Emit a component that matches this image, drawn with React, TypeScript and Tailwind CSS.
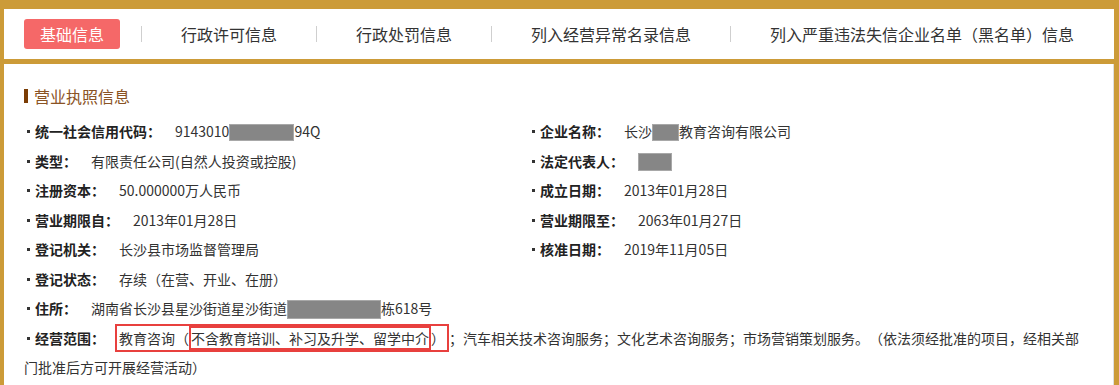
import React from "react";

const tabs = ["行政许可信息", "行政处罚信息", "列入经营异常名录信息", "列入严重违法失信企业名单（黑名单）信息"];

const Mask = ({ w, h = 17 }: { w: number; h?: number }) => (
    <span
        className="inline-block align-middle bg-[#868686] border border-[#a8a8a8] -mt-[2px]"
        style={{ width: w, height: h }}
    />
);

const Bullet = () => (
    <span className="inline-block align-middle w-[3px] h-[3px] bg-[#333] ml-[3px] mr-[5px] -mt-[3px]" />
);

const Row = ({ label, children }: { label: string; children: React.ReactNode }) => (
    <div className="leading-[29.5px] whitespace-nowrap">
        <Bullet />
        <span className="font-bold text-[#222]">{label}：</span>
        <span className="ml-[14px] text-[#333]">{children}</span>
    </div>
);

export default function App() {
    return (
        <div className="w-[1119px] h-[385px] overflow-hidden bg-[#cc9b38] pt-[9px] pl-[4px] pr-[5px] font-['Noto_Sans_CJK_SC','Noto_Sans',sans-serif] [text-spacing-trim:space-all]">
            <div className="h-[50px] bg-white flex items-center text-[16px] text-[#333] whitespace-nowrap">
                <div className="shrink-0 ml-[20px] mr-[21px] h-[30px] px-4 rounded-[3px] bg-[#f56868] text-white flex items-center">
                    基础信息
                </div>
                {tabs.map((t) => (
                    <React.Fragment key={t}>
                        <div className="shrink-0 w-px h-[16px] bg-[#cfcfcf]" />
                        <div className="shrink-0 px-[39px]">{t}</div>
                    </React.Fragment>
                ))}
            </div>

            <div className="mt-[5px] h-[330px] bg-white border-r border-[#dedede] pl-[20px] pr-[27px] pt-[19px] text-[14px]">
                <div className="h-[26px] flex items-center gap-[6px]">
                    <span className="w-[4px] h-[14px] bg-[#7b3d05]" />
                    <span className="text-[16px] text-[#8a5324]">营业执照信息</span>
                </div>

                <div className="mt-[8px] grid grid-cols-[505px_1fr]">
                    <div>
                        <Row label="统一社会信用代码">9143010<Mask w={65} />94Q</Row>
                        <Row label="类型">有限责任公司(自然人投资或控股)</Row>
                        <Row label="注册资本">50.000000万人民币</Row>
                        <Row label="营业期限自">2013年01月28日</Row>
                        <Row label="登记机关">长沙县市场监督管理局</Row>
                    </div>
                    <div>
                        <Row label="企业名称">长沙<Mask w={27} />教育咨询有限公司</Row>
                        <Row label="法定代表人"><Mask w={34} h={18} /></Row>
                        <Row label="成立日期">2013年01月28日</Row>
                        <Row label="营业期限至">2063年01月27日</Row>
                        <Row label="核准日期">2019年11月05日</Row>
                    </div>
                </div>

                <Row label="登记状态">存续（在营、开业、在册）</Row>
                <Row label="住所">湖南省长沙县星沙街道星沙街道<Mask w={94} h={19} />栋618号</Row>
                <div className="leading-[29.5px] text-[#333]">
                    <Bullet />
                    <span className="font-bold text-[#222]">经营范围：</span>
                    <span className="ml-[10px] border-2 border-[#e8403e] px-[2px] py-[2px]">
                        教育咨询（<span className="border-2 border-[#e8403e]">不含教育培训、补习及升学、留学中介</span>）
                    </span>
                    ；汽车相关技术咨询服务；文化艺术咨询服务；市场营销策划服务。（依法须经批准的项目，经相关部门批准后方可开展经营活动）
                </div>
            </div>
        </div>
    );
}
